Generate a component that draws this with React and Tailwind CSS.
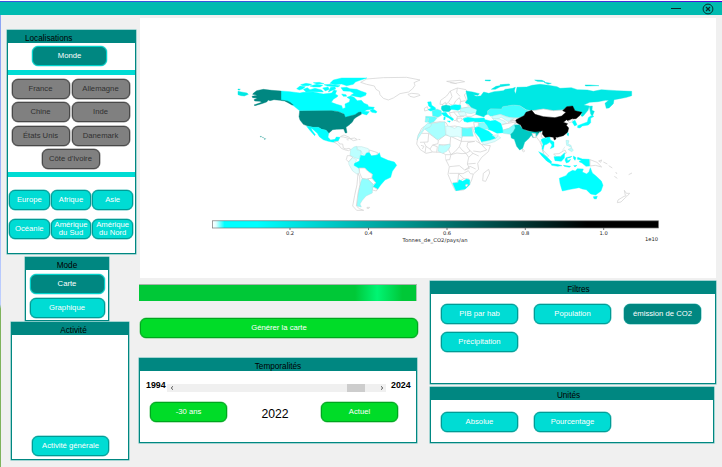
import React from "react";

const OUTLINE = "#d2d2d2";

// Americas, drawn on a grid three times finer than the page
const AMERICAS = [
  ["#00ffff", "M243 63L270 65L300 69L310 67L340 66L370 72L395 69L402 60L410 62L406 72L414 77L412 80L400 88L394 97L410 103L425 107L428 116L436 113L435 102L448 96L450 88L441 82L452 78L462 82L472 92L484 91L492 100L503 104L506 110L523 112L520 117L500 120L493 124L508 125L500 135L490 132L478 128L465 134L450 138L436 143L430 130L410 124L395 122L299 122L290 115L275 103L262 93L243 90Z"],
  ["#00ffff", "M510 122L518 117L524 120L531 125L528 129L516 127Z"],
  ["#00ffff", "M390 40L400 30L425 24L501 24L480 31L466 36L460 43L440 47L425 42L405 44Z"],
  ["#00ffff", "M423 53L440 52L450 56L470 58L482 63L499 69L497 76L482 82L470 80L452 76L462 70L450 64L430 63Z"],
  ["#00ffff", "M290 56L300 48L316 50L308 57L298 60Z"],
  ["#00ffff", "M310 58L322 53L330 59L345 55L365 60L370 66L340 65L318 66Z"],
  ["#00ffff", "M302 44L318 40L335 43L325 47L308 47Z"],
  ["#00ffff", "M330 48L350 43L368 46L360 51L340 51Z"],
  ["#00ffff", "M340 38L358 37L372 41L350 42Z"],
  ["#00ffff", "M368 54L384 51L388 58L376 63Z"],
  ["#00ffff", "M385 66L392 52L405 51L407 57L394 62Z"],
  ["#00ffff", "M372 44L390 43L420 47L414 51L382 48Z"],
  ["#00ffff", "M425 72L438 74L440 79L430 79Z"],
  ["#008781", "M160 70L170 62L190 58L215 61L243 63L243 90L262 93L270 97L280 105L276 105L264 98L254 93L240 91L222 89L210 92L205 90L200 96L185 101L165 107L162 105L185 97L180 94L164 93L162 89L172 84L158 83L156 79L172 76L158 73Z"],
  ["#008781", "M299 123L395 122L415 125L432 132L436 142L450 138L465 134L476 127L483 126L484 133L470 141L462 147L457 156L450 163L438 172L441 188L436 189L431 177L410 178L398 179L386 190L378 180L365 178L355 172L340 172L325 169L310 163L300 150L297 140Z"],
  ["#00ffff", "M325 169L340 172L355 172L365 178L378 181L386 190L384 202L392 210L405 208L409 201L420 202L415 212L406 217L396 216L385 214L370 209L358 200L352 190L340 179L333 173L337 182L346 194L344 197L334 186L328 179L320 169Z"],
  ["#00e8e4", "M114 64L124 66L141 69L145 73L133 78L124 77L114 74Z"],
  ["#00e8e4", "M114 57L121 58L119 60L114 60Z"],
  ["#4aaea9", "M181 199L184 199L184 201L181 201ZM187 202L190 202L190 204ZM193 205L197 206L194 209Z"],
  ["#ffffff", "M500 27L550 23L620 22L660 30L642 38L645 46L638 56L626 66L600 71L580 84L565 90L550 85L540 74L538 64L528 58L523 48L500 43L482 37Z"],
  ["#ffffff", "M624 73L635 70L656 72L660 76L642 82L630 79Z"],
  ["#ffffff", "M402 216L414 214L419 222L428 222L430 234L438 237L447 235L452 238L446 242L436 240L424 235L416 225Z"],
  ["#ffffff", "M421 200L432 195L448 202L449 206L430 201ZM450 206L464 204L472 209L460 212ZM440 209L446 210M475 208L481 209"],
  ["#ddffff", "M470 230L485 230L505 236L510 245L498 249L494 258L487 252L483 242L474 240Z"],
  ["#bbffff", "M452 239L462 231L470 229L471 239L483 243L484 254L478 258L482 268L466 264L450 256Z"],
  ["#ffffff", "M442 257L450 257L458 262L446 276L439 269Z"],
  ["#ddffff", "M446 276L458 263L470 269L464 283L476 292L478 308L472 313L458 303L447 284Z"],
  ["#ffffff", "M508 240L533 248L530 256L514 258L507 249Z"],
  ["#00ffff", "M482 256L494 258L500 249L508 248L514 258L532 255L538 248L542 261L564 271L583 276L590 286L577 304L572 322L555 330L542 345L533 358L518 351L528 338L516 326L517 313L503 304L494 294L477 295L462 286L464 280L478 273Z"],
  ["#ffffff", "M478 294L494 294L504 304L517 313L515 324L503 328L486 325L479 309Z"],
  ["#ffffff", "M503 326L516 325L527 338L520 344Z"],
  ["#ffffff", "M518 350L532 357L529 363L517 360Z"],
  ["#90ffff", "M486 326L503 328L520 343L517 360L517 369L498 378L487 391L480 402L484 411L470 408L474 370L480 343Z"],
  ["#ffffff", "M474 310L479 320L480 343L474 370L469 408L478 416L491 421L470 421L458 408L464 376L471 344Z"],
  ["#ffffff", "M501 412L509 412L507 415L501 415Z"],
];

// Europe and Africa
const AFRICA = [
  ["#ffffff", "M230 222L235 195L245 175L268 160L300 155L318 158L325 170L345 168L370 174L395 172L408 198L422 223L451 227L445 245L425 262L413 280L416 298L400 312L395 330L388 345L370 360L346 362L335 340L324 313L328 290L318 270L317 254L305 247L278 246L258 250L241 239Z"],
  ["#ffffff", "M245 190L266 190L264 216L240 217M266 190L295 211L294 221L278 225L270 237L258 229L252 217M258 229L255 248M270 237L277 246M278 225L292 230L290 247M295 211L316 195L332 199L330 225L296 224M332 199L364 214L366 198M364 214L358 230L366 240L378 250L390 243L381 230L383 218L404 214M364 214L404 214M330 225L326 240L333 254L346 244L358 230M317 254L333 254L329 269L318 270M333 254L351 249L366 251L378 250L386 262L382 282L388 295L374 300L358 287L328 290M382 282L407 280M386 262L399 250L416 258M399 250L388 240M407 212L424 223L440 240L421 246L400 243M328 310L356 310L369 311L385 302L391 311L399 312M356 310L353 337L338 339M357 312L372 326L387 327L387 340M371 326L360 333L353 337M375 300L390 289L407 297M243 226L252 229L247 237"],
  ["#ffffff", "M446 298L449 309L437 334L428 332L430 310Z"],
  ["#aaffff", "M254 177L271 170L275 161L314 155L315 169L317 195L295 208L290 207Z"],
  ["#bbffff", "M235 194L246 181L253 169L263 160L275 161L271 170L254 177L246 188L231 210Z"],
  ["#ddffff", "M317 168L329 169L344 175L354 169L366 173L366 204L352 199L331 200L318 193Z"],
  ["#60ffff", "M366 173L382 175L395 173L400 199L366 199Z"],
  ["#bbffff", "M297 225L310 227L329 222L331 229L320 244L307 250L294 243Z"],
  ["#00ffff", "M338 340L354 338L357 329L368 334L380 327L389 330L389 344L376 357L348 362Z"],
  ["#ffffff", "M378 343L384 344L380 350L376 348Z"],
  // Europe
  ["#ffffff", "M300 103L302 91L320 78L331 63L352 54L378 59L382 66L373 75L380 91L376 105L360 107L363 94L358 83L347 93L340 106L331 103L325 98L312 103ZM331 63L336 80L326 96M352 54L350 68L360 79"],
  ["#ffffff", "M361 95L376 92L382 105L400 114L418 118L410 131L395 139L380 139L366 149L350 154L336 136L327 123L329 112L360 105Z"],
  ["#ffffff", "M306 105L316 97L320 107L312 109ZM253 115L262 110L265 120L254 123Z"],
  ["#ffffff", "M328 129L341 126L352 139L350 150L342 152L333 139ZM341 126L360 125L378 135M352 139L373 140M360 105L364 115L386 111"],
  ["#00ffff", "M263 96L273 95L275 106L286 113L287 120L272 123L264 119L274 114L266 108Z"],
  ["#60ffff", "M257 139L282 140L292 143L281 156L270 160L264 156L266 145L257 144Z"],
  ["#80ffff", "M257 144L265 145L263 157L255 156Z"],
  ["#40ffff", "M276 124L291 117L304 122L305 136L294 142L278 138Z"],
  ["#00e0dc", "M305 109L318 105L331 108L333 119L326 125L309 124L304 117Z"],
  ["#00ffff", "M331 108L345 104L362 106L362 117L354 121L333 118Z"],
  ["#00ffff", "M304 129L318 127L324 136L341 147L337 152L327 144L311 137ZM322 153L331 153L329 157ZM312 140L316 142L315 149L311 149Z"],
  ["#bbffff", "M362 116L386 111L414 118L411 126L393 131L380 129L361 124Z"],
  ["#ddffff", "M354 127L374 125L380 136L360 137Z"],
  ["#ffffff", "M351 145L364 144L366 149L358 157L352 153Z"],
  ["#00ffff", "M370 146L383 142L404 145L433 144L435 155L407 157L400 154L382 157L372 154Z"],
  ["#ffffff", "M320 34L360 31L374 35L345 40ZM330 38L350 41"],
  ["#00e8e4", "M435 30L452 30L450 33L436 32Z"],
];

// Asia and Oceania
const ASIA = [
  ["#00e8e4", "M-102 63L-82 66L-62 71L-66 76L-80 74L-72 79L-58 78L-49 66L-34 70L-18 65L10 62L16 58L38 55L46 52L43 63L47 72L51 52L80 51L96 46L120 43L145 46L171 50L180 55L214 53L232 59L262 60L280 64L304 59L350 62L395 64L395 77L380 82L359 86L342 89L340 101L327 114L319 115L315 100L326 91L316 91L294 95L269 97L251 105L268 108L264 121L249 139L243 138L246 127L225 122L218 108L200 110L188 121L160 123L130 117L106 122L95 121L80 119L60 107L40 105L8 111L5 117L-28 117L-38 123L-36 132L-45 136L-48 141L-73 133L-69 119L-86 112L-94 103L-104 98L-97 88Z"],
  ["#00e8e4", "M-26 58L-12 49L26 43L29 46L1 50L-14 58ZM104 30L126 31L135 35L112 34ZM132 37L154 40L144 43ZM255 45L270 45L297 47L257 48ZM268 109L277 108L276 121L283 124L277 139L272 132ZM0 44L28 42L29 44L0 46Z"],
  ["#40ffff", "M-36 122L-28 116L5 117L8 110L40 105L60 107L79 120L90 122L78 128L74 137L58 143L43 143L28 142L18 139L2 133L-12 137L-28 139L-38 132Z"],
  ["#ffffff", "M95 122L106 121L130 117L160 122L188 120L198 125L185 139L165 143L130 140L105 134Z"],
  ["#ccffff", "M-20 137L0 133L17 140L42 145L37 154L22 154L3 141L-3 146L-17 149L-25 143Z"],
  ["#ddffff", "M-22 145L-3 147L15 154L20 160L3 163L-18 151Z"],
  ["#ffffff", "M31 151L47 145L62 145L48 153ZM25 157L44 151L49 160L29 163Z"],
  ["#ffffff", "M2 166L18 161L47 156L42 166L27 175L7 181Z"],
  ["#80ffff", "M7 181L27 175L43 163L51 164L46 174L39 187L32 193L10 190Z"],
  ["#00ffff", "M-52 148L-40 150L-29 153L-14 151L2 160L7 173L9 188L-9 190L-24 182L-36 178L-42 164Z"],
  ["#80ffff", "M-65 160L-50 157L-40 165L-34 177L-48 178L-64 169Z"],
  ["#ffffff", "M-79 157L-65 157L-65 167L-76 175ZM-85 171L-75 172L-77 180Z"],
  ["#00ffff", "M-75 173L-64 170L-48 178L-34 184L-20 196L-12 206L-29 213L-55 216L-62 202L-75 187Z"],
  ["#ddffff", "M-55 216L-30 211L-12 205L-5 197L2 204L-16 215L-48 224ZM-24 196L-5 194L-11 203Z"],
  ["#00c9c3", "M32 193L39 187L46 174L44 166L58 164L66 175L84 184L98 184L105 186L119 181L125 182L116 192L109 201L99 203L94 195L87 205L74 217L68 235L59 240L50 229L43 208L34 204Z"],
  ["#008781", "M98 184L125 182L116 190L107 187Z"],
  ["#ffffff", "M68 237L74 243L71 246L67 243ZM96 190L107 191L108 203L100 202Z"],
  ["#ffffff", "M109 201L119 187L124 191L124 201L130 205L122 213L127 232L119 214Z"],
  ["#00ffff", "M123 209L132 204L144 207L149 217L140 223L133 225L129 241L136 251L131 250L126 235L129 223ZM135 201L149 199L151 210L162 216L162 231L151 236L156 225L142 206Z"],
  ["#ffffff", "M127 239L134 246L146 258L142 261L132 253ZM161 252L177 251L195 240L199 249L181 259L169 260Z"],
  ["#00ffff", "M116 245L128 251L143 263L155 275L153 281L140 273L125 257ZM153 281L172 283L186 287L173 289L155 286ZM162 260L182 260L194 248L193 264L184 274L165 272ZM198 263L216 259L210 263L201 265L203 272L212 268L207 276L199 279L195 270ZM220 258L228 263L225 271L221 266ZM233 262L247 267L268 268L270 288L258 289L246 279L237 275L244 271L232 268ZM190 286L212 289L208 292L193 289ZM221 287L231 286L225 291Z"],
  ["#ffffff", "M270 269L291 277L305 291L286 286L270 288ZM296 273L305 270L302 277ZM310 276L322 282M326 287L337 294M343 319L352 325M347 306L351 312M386 314L396 309"],
  ["#bbffff", "M198 211L207 212L204 222L213 226L215 233L206 228L200 226ZM204 238L215 234L220 241L215 245L207 240ZM195 230L187 242"],
  ["#000000", "M47 150L60 143L72 137L78 127L95 121L105 133L130 140L165 143L185 138L198 127L188 122L200 110L218 108L225 122L246 127L240 136L228 146L215 147L207 155L200 149L190 157L203 161L199 166L206 174L203 187L190 197L172 202L167 201L168 207L163 210L160 202L148 200L135 202L127 192L128 182L105 185L85 182L68 176L62 165L50 158Z"],
  ["#00ffff", "M216 155L225 151L231 164L224 168ZM233 167L246 162L262 156L265 143L273 137L282 139L272 145L272 158L265 165L247 168L240 174L233 173ZM203 188L206 190L205 198L201 194Z"],
  ["#ffffff", "M204 153L219 147L216 156L208 158Z"],
  ["#00ffff", "M178 325L198 317L205 308L218 301L226 303L232 296L250 297L247 306L260 312L267 305L271 293L277 309L288 318L304 333L309 346L303 363L287 375L272 372L259 359L247 357L237 353L211 358L187 363L184 354L180 340ZM280 380L292 379L289 387L282 386Z"],
  ["#ffffff", "M373 361L379 370L389 370L381 379L376 376ZM374 378L377 382L363 396L352 398L354 390Z"],
];

function strokeFor(fill) {
  if (fill === "#ffffff") return OUTLINE;
  return fill.endsWith("ffff") && fill !== "#00ffff" ? "#a8dcdc" : fill;
}

function Lands({ shapes, x, y }) {
  return (
    <g transform={`translate(${x} ${y}) scale(0.33333)`} strokeLinejoin="round">
      {shapes.map(([fill, d], i) => (
        <path key={i} d={d} fill={fill} stroke={strokeFor(fill)} strokeWidth={fill === "#ffffff" ? 2.2 : 1.2} />
      ))}
    </g>
  );
}

function WorldMap() {
  return (
    <svg viewBox="140 18 576 260" className="block h-full w-full">
      <defs>
        <linearGradient id="scale">
          <stop offset="0" stopColor="#fff" />
          <stop offset=".008" stopColor="#ddffff" />
          <stop offset=".027" stopColor="#00ffff" />
          <stop offset=".1" stopColor="#00ffff" />
          <stop offset=".45" stopColor="#008e88" />
          <stop offset=".84" stopColor="#000" />
          <stop offset="1" stopColor="#000" />
        </linearGradient>
      </defs>
      <Lands shapes={AFRICA} x={340} y={70} />
      <Lands shapes={AMERICAS} x={200} y={70} />
      <Lands shapes={ASIA} x={500} y={70} />
      <rect x="212.5" y="220.8" width="446" height="7.2" fill="url(#scale)" stroke="#777" strokeWidth=".7" />
      {[["0.2", 290], ["0.4", 368.5], ["0.6", 447], ["0.8", 525.3], ["1.0", 603.7]].map(([t, x]) => (
        <g key={t}>
          <path d={`M${x} 228v2`} stroke="#444" strokeWidth=".7" />
          <text x={x} y="235" textAnchor="middle" fontSize="5.2" fill="#222" fontFamily="DejaVu Sans, sans-serif">{t}</text>
        </g>
      ))}
      <text x="402.5" y="241.7" fontSize="5.2" textLength="65" fill="#222" fontFamily="DejaVu Sans, sans-serif">Tonnes_de_CO2/pays/an</text>
      <text x="658" y="241" textAnchor="end" fontSize="5.2" fill="#222" fontFamily="DejaVu Sans, sans-serif">1e10</text>
    </svg>
  );
}

const TONES = {
  cyan: "bg-[#00dcd4] border-[#009b95] shadow-[0_0_0_0.5px_#58c4bf] text-white",
  dark: "bg-[#008781] border-[#008781] shadow-[0_0_0_0.5px_#58c4bf] text-white",
  active: "bg-[#008781] border-[#00d2cb] shadow-[0_0_0_0.5px_#8ce8e4] text-white",
  gray: "bg-[#808080] border-[#484848] shadow-[0_0_0_0.5px_#8c8c8c] text-[#303030]",
  green: "bg-[#00dc28] border-[#00a51e] shadow-[0_0_0_0.5px_#70d080] text-white",
};

function Btn({ tone = "cyan", className = "w-[77px]", children }) {
  return (
    <button className={`flex h-5 shrink-0 items-center justify-center rounded-[6px] border text-center text-[7.7px] leading-[8px] whitespace-nowrap ${TONES[tone]} ${className}`}>
      {children}
    </button>
  );
}

function Panel({ title, className, titleClass = "text-center", children }) {
  return (
    <section className={`flex shrink-0 flex-col border border-[#008781] bg-white shadow-[0_0_0_0.5px_#58b8b4] ${className}`}>
      <h2 className={`h-3 shrink-0 bg-[#008781] text-[8.2px] leading-[15px] text-black ${titleClass}`}>{title}</h2>
      {children}
    </section>
  );
}

export default function App() {
  return (
    <div className="flex h-[467px] w-[722px] flex-col overflow-hidden bg-[#f0f0f0] font-['Liberation_Sans',Arial,sans-serif]">
      <div className="h-px shrink-0 bg-white" />
      <div className="h-px shrink-0 bg-linear-to-r from-[#3a55dc] via-[#3a55dc] via-60% to-[#4b00d8]" />
      <header className="flex h-[13px] shrink-0 items-center justify-end gap-[21px] bg-[#00bbb0] pr-2 text-[#092c2b]">
        <span className="h-px w-2.5 bg-current" />
        <svg viewBox="0 0 12 12" className="size-3" fill="none" stroke="currentColor">
          <circle cx="6" cy="6" r="4.9" />
          <path d="M4 4l4 4M8 4l-4 4" strokeWidth="1.2" />
        </svg>
      </header>

      <div className="flex min-h-0 flex-1">
        <div className="w-px shrink-0 bg-linear-to-b from-[#8da5f4] from-20% via-[#c0d0ff] via-64% to-[#7fb35c] to-65%" />
        <aside className="w-[138px] shrink-0 pt-[15px]">
          <Panel title="Localisations" titleClass="pl-[17px]" className="ml-1.5 h-[224px] w-[129px]">
            <div className="flex h-[27px] shrink-0 items-start pt-[3px] pl-6">
              <Btn tone="active" className="w-[75px]">Monde</Btn>
            </div>
            <div className="h-[5px] shrink-0 bg-[#00dcd4]" />
            <div className="flex h-[97px] shrink-0 flex-wrap content-start justify-center gap-x-0.5 gap-y-[3.5px] pt-[3.5px] pr-[2px]">
              {["France", "Allemagne", "Chine", "Inde", "États Unis", "Danemark", "Côte d'Ivoire"].map((c) => (
                <Btn key={c} tone="gray" className="w-[58px]">{c}</Btn>
              ))}
            </div>
            <div className="h-[5px] shrink-0 bg-[#00dcd4]" />
            <div className="grid grid-cols-3 gap-x-px gap-y-[9px] pt-[13px] pr-0.5 pl-px">
              {["Europe", "Afrique", "Asie", "Océanie"].map((c) => (
                <Btn key={c} className="w-full">{c}</Btn>
              ))}
              <Btn className="w-full">Amérique<br />du Sud</Btn>
              <Btn className="w-full">Amérique<br />du Nord</Btn>
            </div>
          </Panel>

          <Panel title="Mode" className="mt-[3px] ml-6 h-16 w-[84px]">
            <div className="flex flex-col items-center gap-1 pt-1">
              <Btn tone="active" className="w-[75px]">Carte</Btn>
              <Btn className="w-[75px]">Graphique</Btn>
            </div>
          </Panel>

          <Panel title="Activité" titleClass="pl-[7px] text-center" className="mt-px ml-2.5 h-[138px] w-[118px]">
            <div className="flex flex-1 items-end pb-[3px] pl-5">
              <Btn className="w-[77px]">Activité générale</Btn>
            </div>
          </Panel>
        </aside>

        <main className="flex min-w-0 flex-1 flex-col pt-[3px]">
          <div className="ml-px h-[260px] w-[576px] shrink-0 bg-white">
            <WorldMap />
          </div>
          <div className="flex gap-[13px]">
            <div className="w-[278px] shrink-0 pt-1.5">
              <div className="h-[17px] border-t border-r border-t-[#a8b5ab] border-r-[#a8c8b0] bg-linear-to-r from-[#00c837] from-78% via-[#00f573] via-86% to-[#00c837] to-95%" />
              <Btn tone="green" className="mt-[17px] ml-px w-[278px]">Générer la carte</Btn>
              <Panel title="Temporalités" className="mt-5 h-[85px] w-[278px]">
                <div className="flex h-[27px] shrink-0 items-center pt-0.5 pl-1.5">
                  <span className="w-[21px] text-[8.8px] font-bold">1994</span>
                  <div className="mt-1 flex h-2 w-[219px] items-center bg-[#f0f0f0] text-[#404040]">
                    <svg viewBox="0 0 4 4" className="ml-[3px] size-1" fill="none" stroke="currentColor" strokeWidth=".9"><path d="M3 .3L1.2 2L3 3.7" /></svg>
                    <span className="ml-[173px] h-2 w-[18px] bg-[#cdcdcd]" />
                    <svg viewBox="0 0 4 4" className="ml-[15px] size-1" fill="none" stroke="currentColor" strokeWidth=".9"><path d="M1 .3L2.8 2L1 3.7" /></svg>
                  </div>
                  <span className="ml-[5px] text-[8.8px] font-bold">2024</span>
                </div>
                <div className="flex items-start justify-between pt-1 pr-[18px] pl-2.5">
                  <Btn tone="green">-30 ans</Btn>
                  <span className="-mr-[26px] -ml-[24px] pt-0.5 text-[12.2px] leading-5">2022</span>
                  <Btn tone="green">Actuel</Btn>
                </div>
              </Panel>
            </div>
            <div className="pt-[3px]">
              <Panel title="Filtres" titleClass="pl-[11px] text-center" className="h-[103px] w-[286px]">
                <div className="grid grid-cols-[93px_90px_77px] gap-y-2 pt-2.5 pl-2.5">
                  <Btn>PIB par hab</Btn>
                  <Btn>Population</Btn>
                  <Btn tone="dark">émission de CO2</Btn>
                  <Btn>Précipitation</Btn>
                </div>
              </Panel>
              <Panel title="Unités" titleClass="pr-[7px] text-center" className="mt-[3px] h-[56px] w-[284px]">
                <div className="flex gap-4 pt-3 pl-2.5">
                  <Btn>Absolue</Btn>
                  <Btn>Pourcentage</Btn>
                </div>
              </Panel>
            </div>
          </div>
        </main>
      </div>
    </div>
  );
}
